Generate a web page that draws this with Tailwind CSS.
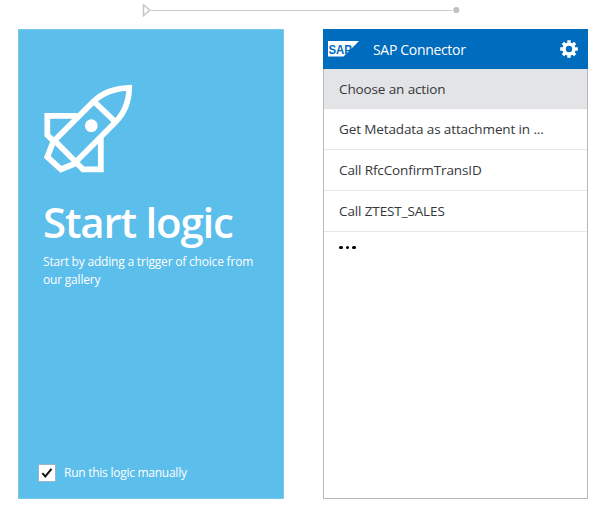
<!DOCTYPE html>
<html lang="en">
<head>
<meta charset="utf-8">
<title>Logic designer</title>
<script src="https://cdn.jsdelivr.net/npm/@tailwindcss/browser@4"></script>
</head>
<body class="h-[514px] w-[603px] overflow-hidden bg-white font-['Open_Sans','Noto_Sans',sans-serif]">
  <svg class="ml-[142px] block h-[29px] w-[320px]" viewBox="0 0 320 29" fill="none">
    <path d="M1.5 4.7V15.8L7.8 10.2Z" stroke="#c3c5ca" stroke-width="1.4"/>
    <path d="M9 10.5H310" stroke="#c9c9d0"/>
    <circle cx="314.3" cy="10" r="3.1" fill="#c0c0c6"/>
  </svg>
  <main class="flex gap-[39px] pl-[18px]">
    <section class="flex h-[470px] w-[266px] flex-col border border-[#79c7e9] bg-[#5bbeeb] text-white">
      <svg class="mt-[54px] ml-6 block size-[92px] shrink-0" viewBox="0 0 92 92" fill="none" stroke="#fff" stroke-width="5.8">
        <path d="M11.500 56.500L50.500 17.500C60 8 72 4.300 86.200 3.800C86 17 82 28.500 72.500 38L32.800 78Z"/>
        <path d="M51.500 18L73 38.500"/>
        <path d="M34 31.900H4.300V51L10.500 57L4.300 73L18 85.300L33.500 79L40 85.300H57.800V53"/>
        <circle cx="48.300" cy="41.700" r="6.400" fill="#fff" stroke="none"/>
      </svg>
      <h1 class="mt-[20px] ml-6 h-[52px] text-[42px] leading-[52px] font-semibold tracking-[-1.2px] whitespace-nowrap">Start logic</h1>
      <p class="mt-[5px] ml-6 text-[12px] leading-[18px] font-medium tracking-[-0.2px] whitespace-nowrap">Start by adding a trigger of choice from<br>our gallery</p>
      <label class="mt-auto mb-[16px] ml-[19px] flex items-center gap-[8px] text-[12px] leading-[18px] font-medium tracking-[-0.26px] whitespace-nowrap">
        <span class="flex size-[18px] items-center justify-center border border-[#9bb5c8] bg-white">
          <svg class="size-[14px]" viewBox="0 0 14 14" fill="none"><path d="M2.300 7.200L5.300 10.500L11.500 2.800" stroke="#171717" stroke-width="2"/></svg>
        </span>
        <span>Run this logic manually</span>
      </label>
    </section>
    <section class="h-[470px] w-[265px] border border-t-0 border-[#b8b8b9] text-[13.500px] tracking-[-0.12px] text-[#35373b]">
      <header class="-mx-px flex h-10 items-center bg-[#006cbe] text-white">
        <svg class="ml-[5px] h-[16px] w-[31px]" viewBox="0 0 31 16">
          <path d="M0 0H31L15.500 15.500H0Z" fill="#fff"/>
          <text x="0.500" y="12.500" font-family="Liberation Sans, sans-serif" font-weight="700" font-size="13" letter-spacing="0" textLength="23.500" lengthAdjust="spacingAndGlyphs" fill="#006cbe">SAP</text>
        </svg>
        <span class="ml-[14px] text-[14px] font-medium tracking-[-0.32px]">SAP Connector</span>
        <svg class="mr-[10px] ml-auto size-[18px]" viewBox="-9 -9 18 18">
          <g stroke="#fff" stroke-width="3.400"><path d="M0-8.800V-4M0 8.800V4M-8.800 0H-4M8.800 0H4M-6.100-6.100L-3-3M6.100 6.100L3 3M-6.100 6.100L-3 3M6.100-6.100L3-3"/></g>
          <circle r="4.900" fill="none" stroke="#fff" stroke-width="3.400"/>
        </svg>
      </header>
      <div class="flex h-10 items-center border-b border-[#dedfe2] bg-[#e3e4e6] pt-px pl-[15px]">Choose an action</div>
      <div class="flex h-[41px] items-center border-b border-[#e8e8e8] pl-[15px]">Get Metadata as attachment in ...</div>
      <div class="flex h-[41px] items-center border-b border-[#e8e8e8] pl-[15px]">Call RfcConfirmTransID</div>
      <div class="flex h-[41px] items-center border-b border-[#e8e8e8] pl-[15px]">Call ZTEST_SALES</div>
      <div class="flex gap-[3px] pt-[13.500px] pl-[15px]"><i class="size-[3.500px] rounded-full bg-black"></i><i class="size-[3.500px] rounded-full bg-black"></i><i class="size-[3.500px] rounded-full bg-black"></i></div>
    </section>
  </main>
</body>
</html>
